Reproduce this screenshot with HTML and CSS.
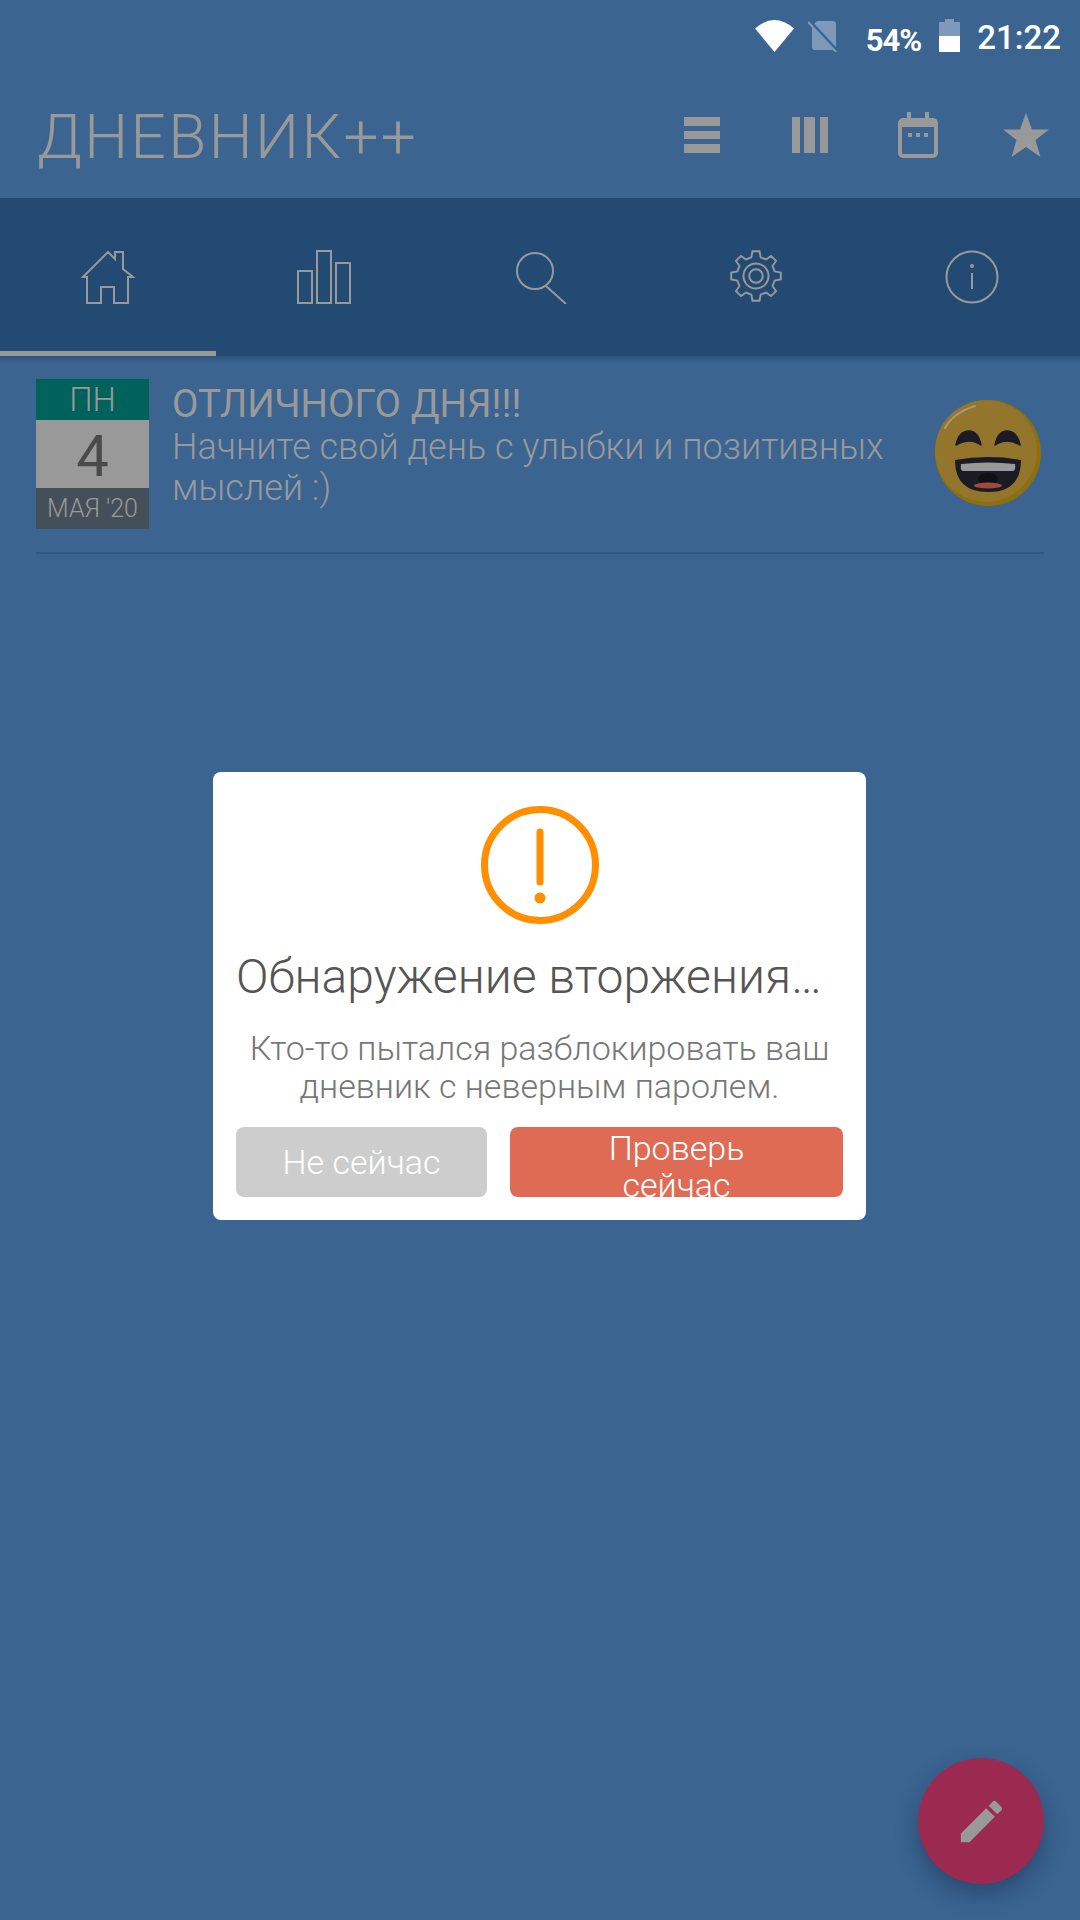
FILE: index.html
```html
<!DOCTYPE html>
<html>
  <head>
    <meta charset="utf-8">
    <title>Дневник++</title>
    <link rel="stylesheet" href="styles.css">
  </head>
  <body>
    <div class="screen">

      <!-- status bar -->
      <div class="status">
        <svg class="st-wifi" width="39" height="32" viewBox="0 0 39 32"><path d="M19.5 32L0 8.5Q19.5-8.5 39 8.5z" fill="#fff"/></svg>
        <svg class="st-sim" width="31" height="32" viewBox="0 0 31 32">
          <path d="M9 1h16a3 3 0 0 1 3 3v23a3 3 0 0 1-3 3H7a3 3 0 0 1-3-3V6z" fill="#7d9aba"/>
          <path d="M1 1l28 30" stroke="#3b6491" stroke-width="4"/>
          <path d="M0 2l28 30" stroke="#7d9aba" stroke-width="2"/>
        </svg>
        <span class="st-pct">54%</span>
        <svg class="st-batt" width="21" height="33" viewBox="0 0 21 33">
          <path d="M6 0h9v3h6v14H0V3h6z" fill="#7d9aba"/>
          <rect y="17" width="21" height="16" fill="#fff"/>
        </svg>
        <span class="st-time">21:22</span>
      </div>

      <!-- app bar -->
      <div class="appbar">
        <div class="app-title">ДНЕВНИК++</div>
        <div class="app-actions">
          <div class="action">
            <svg width="36" height="36" viewBox="0 0 36 36"><path d="M0 0h36v9H0zM0 14h36v8H0zM0 27h36v9H0z" fill="#999"/></svg>
          </div>
          <div class="action">
            <svg width="36" height="36" viewBox="0 0 36 36"><path d="M0 0h8v36H0zM12 0h11v36H12zM28 0h8v36h-8z" fill="#999"/></svg>
          </div>
          <div class="action">
            <svg width="40" height="46" viewBox="0 0 40 46">
              <path d="M9 0h4v6h14V0h4v6h4a5 5 0 0 1 5 5v30a5 5 0 0 1-5 5H5a5 5 0 0 1-5-5V11a5 5 0 0 1 5-5h4zM4 15v26a1 1 0 0 0 1 1h30a1 1 0 0 0 1-1V15z" fill="#999"/>
              <path d="M10 21h4v4h-4zM18 21h4v4h-4zM26 21h4v4h-4z" fill="#999"/>
            </svg>
          </div>
          <div class="action">
            <svg width="46" height="44" viewBox="0 0 46 44"><path d="M23 0l6 16.500h17L32.500 27l5 17L23 34 8.500 44l5-17L0 16.500h17z" fill="#999"/></svg>
          </div>
        </div>
      </div>

      <!-- tabs -->
      <div class="tabs">
        <div class="tab active">
          <svg width="54" height="54" viewBox="0 0 54 54"><path class="line" d="M6 53V27H2L27 2l7 7V2h8v17l10 8h-5v26H33V37H20v16z"/></svg>
        </div>
        <div class="tab">
          <svg width="54" height="54" viewBox="0 0 54 54">
            <rect class="line" x="1" y="21" width="14" height="32"/>
            <rect class="line" x="20" y="1" width="14" height="52"/>
            <rect class="line" x="39" y="13" width="14" height="40"/>
          </svg>
        </div>
        <div class="tab">
          <svg width="54" height="54" viewBox="0 0 54 54">
            <circle class="line" cx="22" cy="21" r="18"/>
            <path class="line" d="M33 36l20 18"/>
          </svg>
        </div>
        <div class="tab">
          <svg width="52" height="52" viewBox="0 0 54 54">
            <polygon class="line" points="46.400,22.160 52.750,23.380 52.750,30.620 46.400,31.840 44.140,37.300 47.760,42.650 42.650,47.760 37.300,44.140 31.840,46.400 30.620,52.750 23.380,52.750 22.160,46.400 16.700,44.140 11.350,47.760 6.240,42.650 9.860,37.300 7.600,31.840 1.250,30.620 1.250,23.380 7.600,22.160 9.860,16.700 6.240,11.350 11.350,6.240 16.700,9.860 22.160,7.600 23.380,1.250 30.620,1.250 31.840,7.600 37.300,9.860 42.650,6.240 47.760,11.350 44.140,16.700"/>
            <circle class="line" cx="27" cy="27" r="13"/>
            <circle class="line" cx="27" cy="27" r="7"/>
          </svg>
        </div>
        <div class="tab">
          <svg width="54" height="54" viewBox="0 0 54 54">
            <circle class="line" cx="27" cy="27" r="25.500"/>
            <circle cx="27" cy="16" r="2" fill="#999"/>
            <path class="line" d="M27 23v16"/>
          </svg>
        </div>
      </div>
      <div class="tabs-shadow"></div>

      <!-- entry -->
      <div class="entry">
        <div class="date">
          <div class="date-day">ПН</div>
          <div class="date-num">4</div>
          <div class="date-month">МАЯ '20</div>
        </div>
        <div class="entry-text">
          <div class="entry-title">ОТЛИЧНОГО ДНЯ!!!</div>
          <div class="entry-body">Начните свой день с улыбки и позитивных мыслей :)</div>
        </div>
        <svg class="smiley" width="106" height="106" viewBox="0 0 106 106">
          <circle cx="53" cy="53" r="53" fill="#8f6f0b"/>
          <circle cx="51" cy="51" r="51" fill="#93752b"/>
          <path d="M10 28Q18 13 40 6" fill="none" stroke="#a89873" stroke-width="2" stroke-linecap="round"/>
          <path d="M21 45Q24 31 34 31 43 31 46 45 35 37 21 45z" fill="#1c1a24" stroke="#1c1a24" stroke-width="1.500" stroke-linejoin="round"/>
          <path d="M60 45Q63 31 72 31 82 31 85 45 72 37 60 45z" fill="#1c1a24" stroke="#1c1a24" stroke-width="1.500" stroke-linejoin="round"/>
          <path d="M20 60Q53 54 86 60 86 92 53 92 20 92 20 60z" fill="#1c1a24"/>
          <path d="M26 64Q53 61 80 64 81 71 78 71H28Q25 71 26 64z" fill="#999"/>
          <ellipse cx="53" cy="79" rx="10" ry="6" fill="#100f16"/>
          <ellipse cx="53" cy="85.500" rx="14" ry="3" fill="#a04a3f"/>
        </svg>
      </div>

      <!-- edit button -->
      <div class="fab">
        <svg width="55" height="55" viewBox="0 0 24 24"><path d="M3 17.250V21h3.750L17.810 9.940l-3.750-3.750L3 17.250zM20.710 7.040c.39-.39.39-1.020 0-1.410l-2.340-2.340c-.39-.39-1.020-.39-1.410 0l-1.830 1.830 3.750 3.750 1.830-1.830z" fill="#999"/></svg>
      </div>

      <!-- dialog -->
      <div class="overlay">
        <div class="dialog">
          <svg class="alert" width="118" height="118" viewBox="0 0 118 118">
            <circle cx="59" cy="59" r="55.500" fill="none" stroke="#ff8f00" stroke-width="7"/>
            <path d="M59 26v50" stroke="#ff8f00" stroke-width="7" stroke-linecap="round"/>
            <circle cx="59" cy="92" r="5.500" fill="#ff8f00"/>
          </svg>
          <div class="dialog-title">Обнаружение вторжения…</div>
          <div class="dialog-text">Кто-то пытался разблокировать ваш дневник с неверным паролем.</div>
          <div class="dialog-buttons">
            <div class="btn btn-cancel">Не сейчас</div>
            <div class="btn btn-confirm">Проверь сейчас</div>
          </div>
        </div>
      </div>

    </div>
  </body>
</html>
```

FILE: styles.css
```css
* { box-sizing: border-box; }
html, body { margin: 0; padding: 0; }
body { font-family: Roboto, "Noto Sans", sans-serif; font-weight: 300; }
svg { display: block; }

.screen { position: relative; width: 1080px; height: 1920px; background-color: #3b6491; overflow: hidden; }

/* status bar */
.status { display: flex; align-items: flex-start; height: 66px; padding: 20px 19px 0 0; justify-content: flex-end; color: white; }
.st-wifi { margin-right: 14px; }
.st-sim { margin-right: 27px; }
.st-pct { margin: 5px 18px 0 0; font-size: 31px; line-height: 32px; font-weight: 700; letter-spacing: -1px; }
.st-batt { margin: -1px 17px 0 0; }
.st-time { font-size: 33px; line-height: 32px; font-weight: 500; margin-top: 2px; }

/* app bar */
.appbar { display: flex; align-items: center; justify-content: space-between; height: 132px; padding: 6px 0 0 37px; }
.app-title { margin-top: 3px; font-size: 62px; font-weight: 300; letter-spacing: 2.4px; color: #999; }
.app-actions { display: flex; }
.action { display: flex; align-items: center; justify-content: center; width: 108px; }

/* tabs */
.tabs { display: flex; height: 158px; background-color: #234a72; }
.tab { display: flex; justify-content: center; flex: 1; padding-top: 52px; border-bottom: 5px solid transparent; }
.tab.active { border-bottom-color: #999; }
.line { fill: none; stroke: #999; stroke-width: 2; }
.tabs-shadow { height: 8px; margin-bottom: -8px; background: linear-gradient(#2e5580, #3b6491); }

/* entry */
.entry { display: flex; align-items: flex-start; margin: 23px 36px 0; padding-bottom: 24px; border-bottom: 2px solid #2f5782; height: 175px; }
.date { width: 113px; flex-shrink: 0; text-align: center; }
.date-day { height: 41px; line-height: 41px; font-size: 33px; background-color: #00625a; color: #999; }
.date-num { height: 68px; line-height: 72px; font-size: 58px; font-weight: 400; background-color: #999; color: #4a4a4a; }
.date-month { height: 41px; line-height: 41px; font-size: 25px; background-color: #444f59; color: #999; }
.entry-text { flex: 1; margin: 2px 0 0 23px; color: #999; }
.entry-title { font-size: 38.5px; line-height: 46px; font-weight: 400; }
.entry-body { font-size: 36px; line-height: 41px; }
.smiley { flex-shrink: 0; margin: 21px 3px 0 0; }

/* edit button */
.fab { position: absolute; left: 918px; top: 1758px; display: flex; align-items: center; justify-content: center; width: 126px; height: 126px; border-radius: 50%; background-color: #9c2a50; box-shadow: 0 10px 22px rgba(20, 40, 70, 0.45); }

/* dialog */
.overlay { position: absolute; top: 0; left: 0; right: 0; bottom: 0; display: flex; justify-content: center; align-items: flex-start; padding: 772px 1px 0 0; }
.dialog { display: flex; flex-direction: column; align-items: center; width: 653px; height: 448px; padding: 34px 23px 0; background-color: white; border-radius: 8px; }
.dialog-title { width: 100%; margin-top: 22px; font-size: 48px; line-height: 62px; color: #555; text-align: left; white-space: nowrap; }
.dialog-text { margin-top: 21px; width: 590px; font-size: 34px; line-height: 38px; color: #777; text-align: center; }
.dialog-buttons { display: flex; width: 100%; gap: 23px; margin-top: 22px; }
.btn { height: 70px; border-radius: 8px; color: white; font-size: 34px; line-height: 41px; text-align: center; overflow: hidden; }
.btn-cancel { width: 251px; padding-top: 15px; background-color: #cdcdcd; }
.btn-confirm { flex: 1; padding: 3px 70px 0; line-height: 37px; background-color: #df6b55; }
```
